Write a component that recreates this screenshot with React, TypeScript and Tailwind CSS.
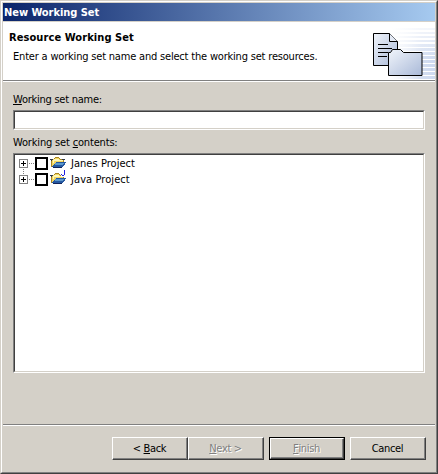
import type { ReactNode } from "react";

function ProjectIcon({ java }: { java?: boolean }) {
  return (
    <svg width="16" height="16" viewBox="0 0 16 16" shapeRendering="crispEdges" className="ml-0.5 shrink-0 overflow-visible">
      <path d="M2 4h2v-1h6v1h4v4h-9l-2 4h-1z" fill="#f3d660" />
      <path d="M3 5h1v-1h5v1h4v1h-9v2h-1z" fill="#fff8b8" />
      <path d="M5 2h4v1h-4zM4 3h1v1h-1zM9 3h1v1h-1zM10 4h3v1h-3zM1 5h1v7h-1zM13 5h1v3h-1z" fill="#a88420" />
      <path d="M0 4h3v1h-3zM12 4h3v1h-3zM1 5h1v1h-1z" fill="#303848" />
      <path d="M6 7h10v1h-1v2h-1v1h-1v1h-1v1h-9v-1h-1v-1h1v-1h1v-1h1v-1h1z" fill="#2558a0" />
      <path d="M6 8h8v1h-9v-1zM5 9h8v1h-8z" fill="#5c98cc" />
      <path d="M2 12h10v1h-9v-1z" fill="#10245c" />
      {java && <path d="M11 -1h5v7h-5z" fill="#fff" />}
      {java && <path d="M14 -1h1v5h-1zM12 4h2v1h-2zM11 3h1v1h-1z" fill="#2020e0" />}
    </svg>
  );
}

function TreeRow({ label, java, linked, spacing }: { label: string; java?: boolean; linked?: boolean; spacing: string }) {
  return (
    <div className="flex h-4 items-center pl-1">
      <svg width="16" height="16" viewBox="0 0 16 16" shapeRendering="crispEdges" className="shrink-0">
        <rect x="0.5" y="4.5" width="8" height="8" fill="#fff" stroke="#808080" />
        <path d="M2 8.5h5M4.5 6v5" stroke="#000" fill="none" />
        <path d="M10 8.5h6" stroke="#808080" strokeDasharray="1 1" />
        <path d={linked ? "M4.5 0v4" : "M4.5 14v2"} stroke="#808080" strokeDasharray="1 1" />
      </svg>
      <span className="mt-px h-[13px] w-[13px] shrink-0 border-2 border-black bg-white" />
      <ProjectIcon java={java} />
      <span className={`ml-[5px] mt-0.5 leading-4 ${spacing}`}>{label}</span>
    </div>
  );
}

function Button({ children, disabled, primary }: { children: ReactNode; disabled?: boolean; primary?: boolean }) {
  return (
    <button
      className={`flex h-[23px] w-[76px] ${primary ? "border border-black" : ""}`}
      disabled={disabled}
    >
      <span className="flex h-full w-full border border-t-white border-l-white border-r-[#404040] border-b-[#404040]">
        <span
          className={`flex h-full w-full items-center justify-center whitespace-pre border-r border-b border-[#808080] leading-none ${
            disabled ? "text-[#808080] [text-shadow:1px_1px_0_#fff]" : "text-black"
          }`}
        >
          {children}
        </span>
      </span>
    </button>
  );
}

function Sunken({ className, children }: { className: string; children?: ReactNode }) {
  return (
    <div className={`border border-t-[#808080] border-l-[#808080] border-r-white border-b-white ${className}`}>
      <div className="h-full border border-t-[#404040] border-l-[#404040] border-r-[#d4d0c8] border-b-[#d4d0c8] bg-white">
        {children}
      </div>
    </div>
  );
}

const stripes = [28, 32, 36, 40, 44, 48, 52, 56, 60, 64, 68, 72, 76];

function Banner() {
  return (
    <svg width="65" height="58" viewBox="370 22 65 58" className="shrink-0">
      <defs>
        <linearGradient id="paper" x1="0" y1="0" x2="1" y2="1">
          <stop offset="0" stopColor="#f1f5fb" />
          <stop offset="1" stopColor="#a9b9d8" />
        </linearGradient>
        <linearGradient id="stripe" x1="0" y1="0" x2="1" y2="0">
          <stop offset="0" stopColor="#dfe6f4" stopOpacity="0" />
          <stop offset="0.7" stopColor="#d3ddf0" />
          <stop offset="1" stopColor="#cdd9ef" />
        </linearGradient>
      </defs>
      {stripes.map((y, i) => (
        <rect key={y} x="390" y={y} width="45" height={i < 4 ? 2 : 3} fill="url(#stripe)" opacity={Math.min(1, 0.25 + i * 0.1)} />
      ))}
      <path d="M373.5 33.5h16l8 8v24h-24z" fill="url(#paper)" stroke="#000" />
      <path d="M389.5 33.5v8h8" fill="#e4eaf5" stroke="#000" />
      <path d="M378 44.5h10M378 48.5h14M378 52.5h10M378 56.5h9" stroke="#000" />
      <path d="M388.5 75.5v-23h2l2-3h8l3 3h18.500v23z" fill="url(#paper)" stroke="#000" strokeLinejoin="round" />
    </svg>
  );
}

export default function App() {
  return (
    <div className="h-[474px] w-[438px] border border-t-[#d4d0c8] border-l-[#d4d0c8] border-r-[#404040] border-b-[#404040] font-['DejaVu_Sans_Condensed','DejaVu_Sans',sans-serif] text-[11px] text-black [font-stretch:condensed]">
      <div className="h-full border border-t-white border-l-white border-r-[#808080] border-b-[#808080]">
        <div className="flex h-full flex-col border border-[#d4d0c8] bg-[#d4d0c8]">
          <div className="h-[18px] shrink-0 whitespace-nowrap bg-linear-to-r/srgb from-[#0a246a] to-[#a6caf0] pl-px font-bold leading-5 tracking-[-0.05px] text-white">
            New Working Set
          </div>
          <div className="mt-px flex h-[58px] shrink-0 justify-between bg-white">
            <div className="whitespace-nowrap pt-2 pl-1.5">
              <div className="font-bold leading-4 tracking-[0.08px]">Resource Working Set</div>
              <div className="mt-[3px] pl-1 leading-4 tracking-[-0.19px]">
                Enter a working set name and select the working set resources.
              </div>
            </div>
            <Banner />
          </div>
          <div className="h-0.5 shrink-0 border-t border-b border-t-[#808080] border-b-white" />
          <div className="flex flex-col pt-[10px] pr-2.5 pl-2.5">
            <div className="h-[18px] leading-4 tracking-[-0.25px]">
              <span className="underline">W</span>orking set name:
            </div>
            <Sunken className="h-5" />
            <div className="h-[23px] pt-[5px] leading-4 tracking-[-0.17px]">
              Working set <span className="underline">c</span>ontents:
            </div>
            <Sunken className="h-[220px]">
              <TreeRow label="Janes Project" spacing="tracking-[0.04px]" />
              <TreeRow label="Java Project" spacing="tracking-[0.08px]" java linked />
            </Sunken>
          </div>
          <div className="mt-[51px] h-0.5 shrink-0 border-t border-b border-t-[#808080] border-b-white" />
          <div className="flex justify-end pt-[11px] pr-[9px] tracking-[-0.35px]">
            <Button>{"< "}<span className="underline">B</span>ack</Button>
            <Button disabled><span className="underline">N</span>{"ext >"}</Button>
            <div className="w-[5px]" />
            <Button disabled primary><span className="underline">F</span>inish</Button>
            <div className="w-[5px]" />
            <Button>Cancel</Button>
          </div>
        </div>
      </div>
    </div>
  );
}
